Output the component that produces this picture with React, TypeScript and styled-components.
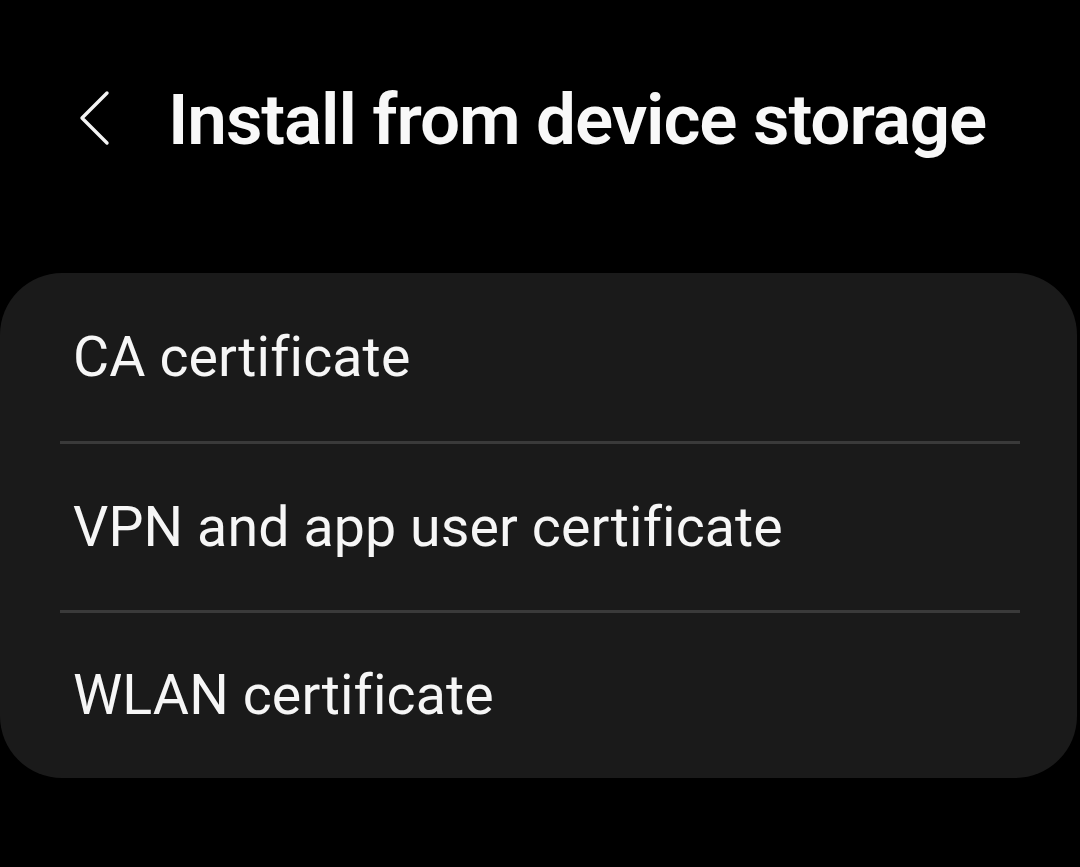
import React from "react";
import styled, { createGlobalStyle } from "styled-components";

const Global = createGlobalStyle`
  html, body { margin: 0; padding: 0; background: #000; }
  body { font-family: Roboto, "Noto Sans", sans-serif; -webkit-font-smoothing: antialiased; }
`;

const Screen = styled.div`
  width: 1080px;
  height: 867px;
  background: #000;
  display: flex;
  flex-direction: column;
  overflow: hidden;
`;

const Header = styled.header`
  height: 273px;
  display: flex;
  align-items: flex-start;
  padding-top: 80px;
  box-sizing: border-box;
`;

const BackButton = styled.button`
  background: none;
  border: 0;
  padding: 0;
  margin-left: 74px;
  margin-top: 8px;
  width: 40px;
  height: 60px;
  display: flex;
  align-items: center;
  justify-content: center;
`;

const Title = styled.h1`
  margin: 0 0 0 54px;
  font-family: Roboto, sans-serif;
  font-weight: 600;
  font-size: 71px;
  line-height: 80px;
  color: #f8f8f8;
  letter-spacing: -1.1px;
`;

const Card = styled.div`
  margin: 0 3px 0 0;
  background: #1a1a1a;
  border-radius: 62px;
  display: flex;
  flex-direction: column;
  padding: 0 57px 0 60px;
`;

const Row = styled.div<{ $h: number }>`
  height: ${(p) => p.$h}px;
  display: flex;
  align-items: center;
  padding-left: 13px;
  font-size: 55.5px;
  color: #f6f6f6;
  letter-spacing: 0.1px;
`;

const Divider = styled.div`
  height: 3px;
  background: #3a3a3a;
`;

const items = [
  { label: "CA certificate", h: 168 },
  { label: "VPN and app user certificate", h: 166 },
  { label: "WLAN certificate", h: 165 },
];

export default function App() {
  return (
    <Screen>
      <Global />
      <Header>
        <BackButton aria-label="Back">
          <svg width="34" height="56" viewBox="0 0 34 56" fill="none">
            <path d="M30 3 L5 28 L30 53" stroke="#f4f4f4" strokeWidth="3.4" strokeLinecap="round" strokeLinejoin="round" />
          </svg>
        </BackButton>
        <Title>Install from device storage</Title>
      </Header>
      <Card>
        {items.map((it, i) => (
          <React.Fragment key={it.label}>
            {i > 0 && <Divider />}
            <Row $h={it.h}>{it.label}</Row>
          </React.Fragment>
        ))}
      </Card>
    </Screen>
  );
}
